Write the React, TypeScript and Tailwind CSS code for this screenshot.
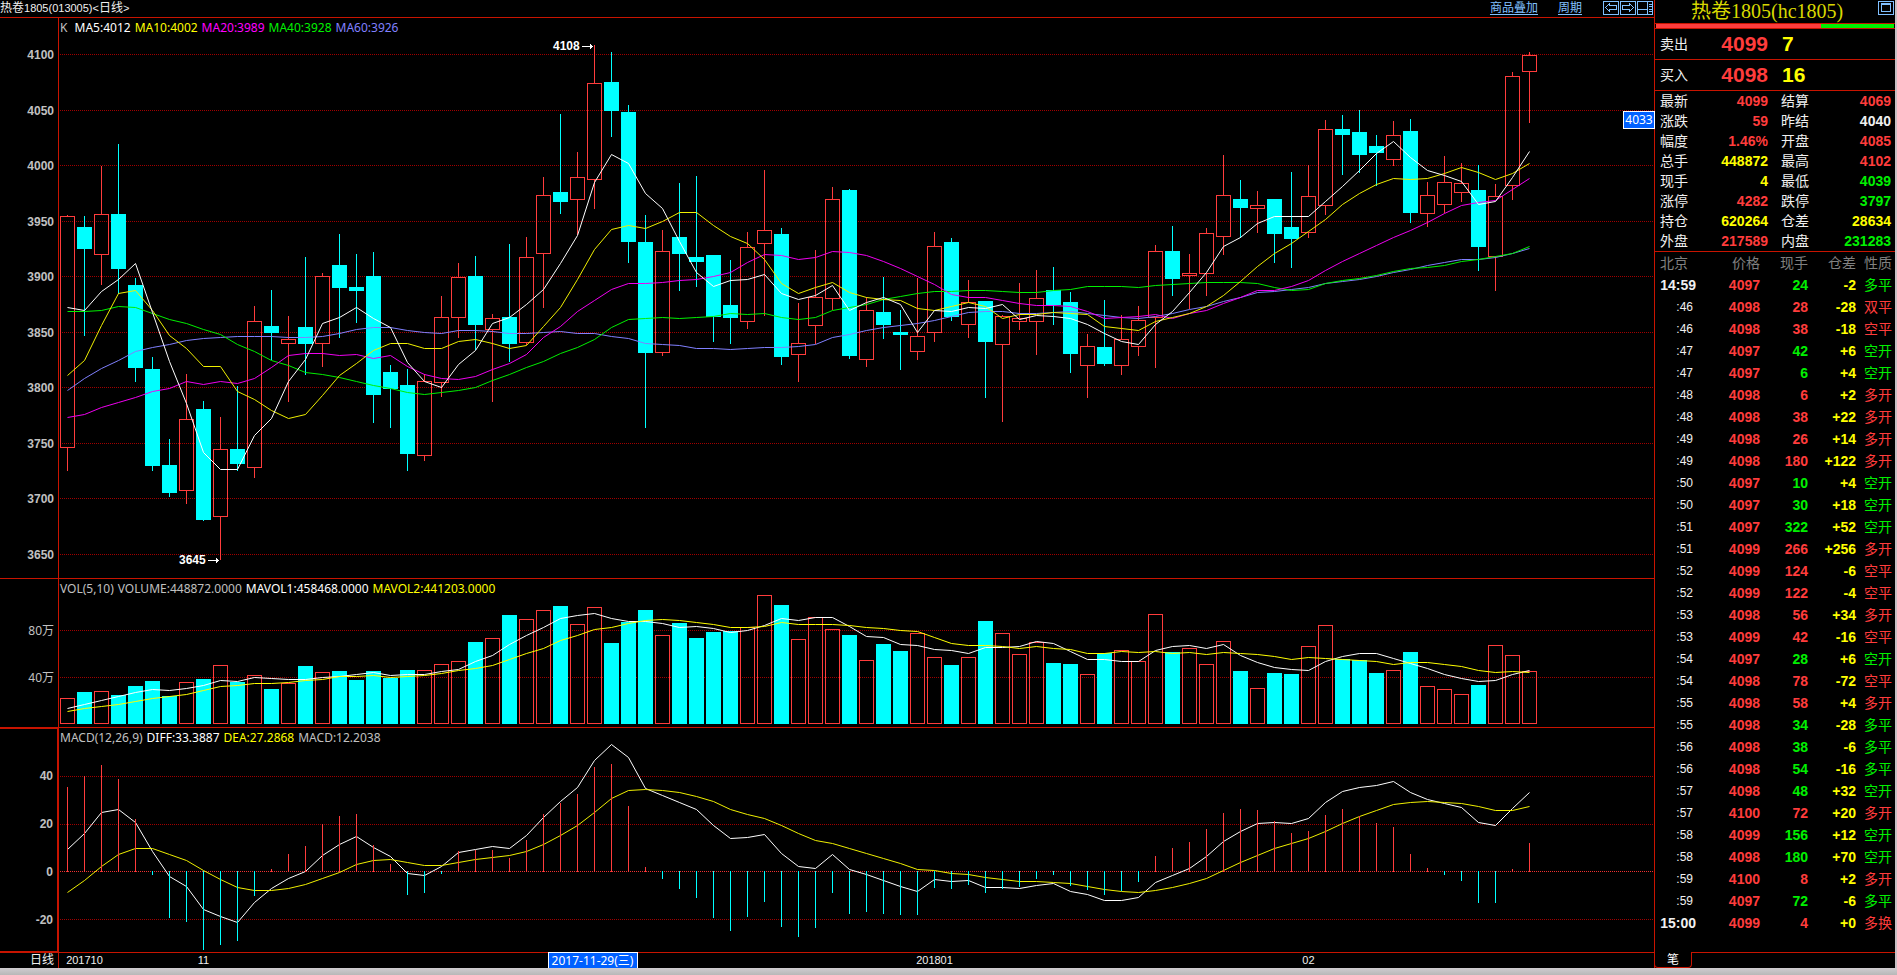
import React from "react";

const CJK = "font-['Liberation_Sans','Noto_Sans_CJK_SC',sans-serif]";
const UI = "font-['Noto_Sans','Noto_Sans_CJK_SC',sans-serif]";

const STEP = 17;
const ORIGIN = 60;
const PLOT_LEFT = 59;
const PLOT_WIDTH = 1595;

// [high, body top, body bottom, low, rising] in plot rows
type Candle = [number, number, number, number, 0 | 1];

const candles: Candle[] = [
  [215, 216, 447, 471, 1], [216, 227, 249, 336, 0], [166, 214, 254, 285, 1], [144, 214, 269, 294, 0],
  [278, 285, 368, 382, 0], [357, 369, 466, 471, 0], [439, 465, 493, 497, 0], [374, 419, 490, 504, 1],
  [401, 409, 520, 521, 0], [417, 449, 516, 560, 1], [386, 449, 464, 471, 0], [306, 321, 467, 478, 1],
  [290, 326, 333, 360, 0], [316, 339, 343, 402, 1], [257, 327, 344, 375, 0], [273, 276, 343, 367, 1],
  [234, 265, 288, 338, 0], [254, 287, 291, 323, 0], [252, 276, 395, 423, 0], [365, 372, 389, 428, 0],
  [369, 385, 454, 471, 0], [374, 381, 455, 461, 1], [296, 317, 382, 397, 1], [263, 277, 317, 338, 1],
  [256, 276, 325, 350, 0], [314, 318, 329, 402, 1], [244, 317, 344, 362, 0], [237, 257, 342, 345, 1],
  [177, 195, 253, 308, 1], [114, 192, 202, 214, 0], [152, 177, 199, 235, 1], [45, 83, 179, 209, 1],
  [52, 82, 111, 137, 0], [105, 112, 242, 263, 0], [215, 242, 353, 428, 0], [230, 251, 352, 356, 1],
  [183, 237, 254, 291, 0], [176, 257, 262, 287, 0], [255, 255, 317, 342, 0], [260, 305, 318, 344, 0],
  [232, 247, 321, 329, 1], [170, 230, 243, 316, 1], [228, 234, 357, 365, 0], [303, 343, 354, 382, 1],
  [250, 297, 325, 344, 1], [187, 199, 298, 310, 1], [189, 190, 356, 359, 0], [297, 310, 359, 367, 1],
  [277, 312, 325, 339, 0], [310, 332, 335, 370, 0], [278, 336, 351, 360, 1], [232, 246, 332, 342, 1],
  [238, 242, 317, 321, 0], [280, 302, 324, 338, 1], [301, 301, 342, 398, 0], [315, 316, 344, 422, 1],
  [283, 318, 321, 330, 1], [270, 298, 321, 355, 1], [267, 290, 305, 325, 0], [292, 302, 354, 373, 0],
  [334, 346, 365, 398, 1], [300, 347, 364, 366, 0], [315, 339, 365, 375, 1], [306, 320, 346, 356, 1],
  [245, 251, 317, 368, 1], [226, 251, 279, 296, 0], [254, 273, 275, 309, 1], [228, 233, 273, 296, 1],
  [155, 195, 236, 255, 1], [180, 199, 208, 238, 0], [191, 205, 208, 233, 1], [199, 199, 234, 263, 0],
  [172, 227, 239, 268, 0], [165, 196, 232, 238, 1], [120, 129, 205, 215, 1], [115, 129, 135, 175, 0],
  [110, 132, 155, 173, 0], [135, 146, 153, 186, 0], [121, 135, 159, 166, 1], [119, 131, 213, 223, 0],
  [182, 195, 213, 227, 1], [156, 182, 204, 213, 1], [163, 183, 192, 202, 1], [165, 190, 247, 271, 0],
  [184, 196, 256, 291, 1], [72, 76, 185, 200, 1], [52, 55, 71, 123, 1],
];

const ma5 = [307, 310, 291, 279, 263, 312, 361, 403, 452, 469, 469, 435, 418, 381, 359, 323, 317, 307, 318, 327, 362, 381, 387, 364, 350, 323, 317, 304, 289, 263, 235, 182, 154, 163, 193, 208, 241, 272, 286, 280, 279, 274, 293, 299, 295, 285, 310, 302, 297, 304, 332, 310, 311, 307, 308, 304, 319, 315, 316, 318, 324, 333, 341, 344, 324, 311, 292, 272, 246, 237, 223, 216, 216, 216, 201, 186, 170, 153, 141, 157, 170, 175, 181, 204, 201, 177, 151];
const ma10 = [375, 360, 325, 293, 290, 310, 335, 348, 366, 366, 391, 399, 410, 418, 414, 395, 375, 363, 350, 343, 343, 348, 348, 341, 339, 343, 348, 345, 326, 307, 279, 249, 229, 225, 228, 221, 212, 212, 225, 236, 243, 259, 283, 293, 287, 282, 292, 297, 299, 300, 308, 310, 306, 302, 306, 318, 314, 314, 312, 313, 314, 326, 328, 330, 321, 317, 313, 306, 295, 281, 266, 253, 243, 231, 219, 204, 193, 184, 178, 179, 178, 173, 167, 172, 179, 173, 163];
const ma20 = [417, 414, 407, 402, 397, 391, 388, 381, 384, 381, 383, 378, 367, 355, 353, 353, 355, 354, 358, 355, 366, 374, 378, 379, 376, 369, 363, 354, 337, 326, 311, 300, 289, 283, 283, 282, 280, 279, 276, 272, 262, 254, 255, 259, 257, 251, 252, 255, 261, 268, 276, 284, 294, 297, 297, 300, 303, 305, 305, 306, 311, 318, 317, 316, 314, 318, 313, 310, 303, 297, 290, 290, 286, 280, 270, 261, 253, 245, 237, 230, 222, 213, 205, 202, 200, 189, 178];
const ma40 = [311, 311, 310, 306, 307, 313, 319, 323, 329, 334, 344, 351, 360, 365, 372, 374, 377, 381, 385, 388, 392, 394, 392, 390, 387, 380, 374, 367, 361, 353, 347, 339, 327, 319, 318, 317, 318, 317, 316, 313, 314, 313, 317, 319, 317, 310, 307, 304, 299, 296, 293, 291, 291, 290, 290, 291, 292, 292, 290, 289, 286, 286, 286, 287, 285, 284, 283, 282, 282, 282, 283, 287, 290, 289, 283, 280, 278, 275, 271, 268, 267, 265, 261, 259, 256, 253, 246];
const ma60 = [390, 378, 368, 360, 351, 347, 344, 340, 338, 337, 336, 336, 336, 337, 337, 336, 333, 329, 327, 327, 330, 332, 333, 330, 330, 331, 333, 333, 332, 331, 333, 333, 336, 338, 343, 344, 345, 348, 348, 349, 348, 347, 347, 346, 344, 337, 334, 330, 327, 325, 323, 320, 316, 312, 311, 311, 313, 313, 312, 311, 313, 315, 317, 318, 316, 313, 309, 306, 301, 297, 292, 291, 289, 287, 283, 281, 279, 276, 272, 269, 265, 262, 259, 259, 257, 253, 248];

const volumes = [698, 692, 691, 695, 686, 681, 696, 682, 679, 665, 682, 675, 689, 683, 666, 672, 671, 680, 671, 678, 670, 670, 664, 661, 642, 638, 615, 619, 610, 606, 624, 607, 643, 622, 610, 635, 623, 638, 632, 631, 627, 595, 605, 639, 617, 629, 635, 660, 644, 651, 633, 657, 665, 657, 621, 633, 654, 642, 663, 664, 674, 653, 650, 661, 614, 652, 648, 664, 641, 671, 688, 673, 674, 646, 625, 659, 660, 673, 670, 652, 686, 689, 694, 685, 645, 655, 671];
const mavol1 = [708, 704, 700, 696, 692, 689, 690, 688, 685, 680, 681, 677, 678, 679, 679, 677, 676, 674, 672, 675, 674, 674, 671, 669, 661, 655, 644, 635, 627, 618, 615, 613, 618, 621, 621, 623, 627, 626, 628, 632, 630, 625, 618, 620, 617, 617, 626, 636, 637, 644, 645, 649, 650, 653, 647, 647, 646, 641, 643, 651, 659, 659, 661, 661, 650, 646, 645, 648, 644, 655, 662, 667, 669, 670, 661, 656, 653, 653, 658, 663, 668, 674, 678, 681, 680, 674, 670];
const mavol2 = [711, 708, 706, 704, 701, 698, 696, 694, 690, 686, 685, 683, 683, 682, 680, 679, 676, 676, 675, 677, 676, 675, 673, 670, 668, 665, 659, 653, 648, 640, 635, 629, 627, 623, 620, 619, 620, 622, 624, 627, 627, 626, 622, 624, 624, 624, 625, 627, 628, 630, 631, 637, 643, 645, 645, 646, 648, 646, 648, 649, 653, 653, 651, 652, 651, 653, 652, 654, 652, 653, 654, 656, 659, 657, 658, 659, 660, 661, 664, 662, 662, 664, 666, 670, 672, 671, 672];

const macd = [787, 776, 765, 779, 819, 874, 917, 921, 949, 944, 940, 895, 869, 854, 846, 824, 816, 814, 845, 864, 894, 892, 873, 851, 850, 850, 858, 840, 814, 803, 794, 767, 764, 806, 867, 878, 888, 897, 917, 930, 916, 901, 926, 936, 927, 892, 913, 911, 913, 914, 914, 887, 888, 884, 892, 888, 886, 878, 874, 885, 889, 894, 890, 881, 856, 848, 842, 829, 813, 809, 810, 821, 833, 831, 815, 809, 816, 823, 827, 854, 868, 874, 880, 902, 902, 869, 843];
const diff = [849, 833, 812, 809, 822, 851, 876, 886, 909, 916, 922, 902, 888, 878, 871, 855, 844, 836, 847, 856, 873, 875, 866, 852, 849, 846, 848, 835, 817, 801, 787, 760, 744, 757, 788, 795, 802, 809, 825, 838, 837, 834, 853, 866, 868, 854, 869, 874, 880, 886, 891, 879, 881, 880, 887, 887, 888, 885, 883, 891, 894, 900, 900, 897, 882, 875, 868, 856, 841, 831, 823, 822, 823, 818, 802, 791, 787, 785, 781, 792, 799, 803, 807, 822, 825, 808, 792];
const dea = [892, 880, 866, 854, 848, 848, 854, 860, 870, 879, 887, 890, 890, 888, 884, 878, 872, 864, 860, 859, 862, 865, 865, 862, 859, 857, 855, 851, 844, 835, 825, 812, 798, 790, 789, 790, 792, 796, 801, 809, 814, 818, 825, 833, 840, 843, 848, 853, 858, 863, 869, 870, 873, 874, 877, 879, 881, 881, 882, 883, 886, 889, 891, 892, 890, 887, 883, 878, 870, 862, 855, 848, 843, 838, 831, 823, 816, 810, 804, 802, 801, 802, 803, 806, 810, 810, 806];

const centre = (i: number) => ORIGIN + 7.5 + STEP * i;
const share = (x: number) => `${((x - PLOT_LEFT) / PLOT_WIDTH) * 100}%`;

function Curve({ rows, color }: { rows: number[]; color: string }) {
  return (
    <polyline
      fill="none"
      stroke={color}
      strokeWidth="1"
      points={rows.map((y, i) => `${centre(i)},${y + 0.5}`).join(" ")}
    />
  );
}

function Grid({ rows, color = "#a00000" }: { rows: number[]; color?: string }) {
  return (
    <g stroke={color} strokeDasharray="1 1" shapeRendering="crispEdges">
      {rows.map((y) => (
        <line key={y} x1={PLOT_LEFT + 1} x2={PLOT_LEFT + PLOT_WIDTH} y1={y + 0.5} y2={y + 0.5} />
      ))}
    </g>
  );
}

function Plot({ top, height, size, label, children }: { top: number; height: number; size: string; label: string; children: React.ReactNode }) {
  return (
    <svg
      role="img"
      aria-label={label}
      viewBox={`${PLOT_LEFT} ${top} ${PLOT_WIDTH} ${height}`}
      preserveAspectRatio="none"
      className={`block w-full overflow-visible ${size}`}
    >
      {children}
    </svg>
  );
}

function PriceChart() {
  return (
    <Plot top={38} height={540} size="h-[540px]" label="K线">
      <Grid rows={[54, 110, 165, 221, 276, 332, 387, 443, 498, 554]} />
      <g shapeRendering="crispEdges">
        {candles.map(([hi, top, bottom, lo, up], i) => {
          const x = ORIGIN + STEP * i;
          return up ? (
            <g key={i} stroke="#ff3c3c" fill="none">
              <path d={`M${x + 7.5} ${hi}V${top}M${x + 7.5} ${bottom}V${lo}`} />
              <rect x={x + 0.5} y={top + 0.5} width="14" height={bottom - top} />
            </g>
          ) : (
            <g key={i} fill="#00ffff">
              <rect x={x + 7} y={hi} width="1" height={lo - hi} />
              <rect x={x} y={top} width="15" height={bottom - top} />
            </g>
          );
        })}
      </g>
      <Curve rows={ma60} color="#8080ff" />
      <Curve rows={ma40} color="#00f000" />
      <Curve rows={ma20} color="#f000f0" />
      <Curve rows={ma10} color="#f0f000" />
      <Curve rows={ma5} color="#ffffff" />
    </Plot>
  );
}

function VolumeChart() {
  return (
    <Plot top={599} height={128} size="h-[128px]" label="成交量">
      <Grid rows={[630, 677]} />
      <g shapeRendering="crispEdges">
        {volumes.map((y, i) => {
          const x = ORIGIN + STEP * i;
          return candles[i][4] ? (
            <rect key={i} x={x + 0.5} y={y + 0.5} width="14" height={723 - y} fill="none" stroke="#ff3c3c" />
          ) : (
            <rect key={i} x={x} y={y} width="15" height={724 - y} fill="#00ffff" />
          );
        })}
      </g>
      <Curve rows={mavol1} color="#ffffff" />
      <Curve rows={mavol2} color="#ffff00" />
    </Plot>
  );
}

function MacdChart() {
  return (
    <Plot top={748} height={204} size="h-[204px]" label="MACD">
      <Grid rows={[776, 824, 919]} />
      <Grid rows={[871]} color="#f03030" />
      <Curve rows={diff} color="#ffffff" />
      <Curve rows={dea} color="#f0f000" />
      <g shapeRendering="crispEdges">
        {macd.map((y, i) => (
          <rect
            key={i}
            x={ORIGIN + 7 + STEP * i}
            y={Math.min(y, 871)}
            width="1"
            height={Math.abs(y - 871) + 1}
            fill={y < 871 ? "#ff3c3c" : "#00ffff"}
          />
        ))}
      </g>
    </Plot>
  );
}

function Legend({ items }: { items: [string, string][] }) {
  return (
    <div className={`flex h-5 items-center gap-1 pl-px text-xs whitespace-nowrap ${UI}`}>
      {items.map(([text, color]) => (
        <span key={text} className={color}>{text}</span>
      ))}
    </div>
  );
}

function Marker({ text, place }: { text: string; place: string }) {
  return (
    <div className={`absolute flex h-4 items-center gap-0.5 text-xs font-bold text-white ${place}`}>
      {text}
      <svg width="11" height="7" viewBox="0 0 11 7" fill="#fff" shapeRendering="crispEdges" aria-hidden="true">
        <path d="M0 3h11v1H0zM8 1h1v5H8zM9 2h1v3H9z" />
      </svg>
    </div>
  );
}

type IconKind = "left" | "right" | "split" | "window";

function ToolButton({ kind, label }: { kind: IconKind; label: string }) {
  return (
    <button type="button" aria-label={label} className="block size-4">
      <svg width="16" height="14" viewBox="0 0 16 14" fill="none" stroke="#80c0ff" shapeRendering="crispEdges" className="block">
        <path d="M.5.5h15v13H.5z" />
        {kind === "left" && <path d="M2.5 6.5l4-4v2h7v4h-7v2z" />}
        {kind === "right" && <path d="M13.5 6.5l-4-4v2h-7v4h7v2z" />}
        {kind === "split" && <path d="M0 8.5h10M10.5 0v14M12 3.5h3M12 5.5h3M12 8.5h3M12 10.5h3" />}
        {kind === "window" && <path d="M3.5 2.5h9v8h-9zM3 3.5h10" />}
      </svg>
    </button>
  );
}

function Axis({ labels, box, size }: { labels: string[]; box: string; size: string }) {
  return (
    <div className={`w-[59px] shrink-0 border-r border-[#c81400] pr-1 text-right ${box}`}>
      <div className={`flex flex-col justify-between text-xs leading-4 text-[#c0c0c0] ${size}`}>
        {labels.map((t) => (
          <span key={t}>{t}</span>
        ))}
      </div>
    </div>
  );
}

const gray = "text-[#c0c0c0]";
const red = "text-[#ff3c3c]";
const green = "text-[#00f000]";
const yellow = "text-[#ffff00]";
const white = "text-[#f0f0f0]";

const quotes: [string, string, string, string, string, string][] = [
  ["最新", "4099", red, "结算", "4069", red],
  ["涨跌", "59", red, "昨结", "4040", white],
  ["幅度", "1.46%", red, "开盘", "4085", red],
  ["总手", "448872", yellow, "最高", "4102", red],
  ["现手", "4", yellow, "最低", "4039", green],
  ["涨停", "4282", red, "跌停", "3797", green],
  ["持仓", "620264", yellow, "仓差", "28634", yellow],
  ["外盘", "217589", red, "内盘", "231283", green],
];

const ticks: [string, string, string, string, string, string][] = [
  ["14:59", "4097", "24", "-2", "多平", green],
  [":46", "4098", "28", "-28", "双平", red],
  [":46", "4098", "38", "-18", "空平", red],
  [":47", "4097", "42", "+6", "空开", green],
  [":47", "4097", "6", "+4", "空开", green],
  [":48", "4098", "6", "+2", "多开", red],
  [":48", "4098", "38", "+22", "多开", red],
  [":49", "4098", "26", "+14", "多开", red],
  [":49", "4098", "180", "+122", "多开", red],
  [":50", "4097", "10", "+4", "空开", green],
  [":50", "4097", "30", "+18", "空开", green],
  [":51", "4097", "322", "+52", "空开", green],
  [":51", "4099", "266", "+256", "多开", red],
  [":52", "4099", "124", "-6", "空平", red],
  [":52", "4099", "122", "-4", "空平", red],
  [":53", "4098", "56", "+34", "多开", red],
  [":53", "4099", "42", "-16", "空平", red],
  [":54", "4097", "28", "+6", "空开", green],
  [":54", "4098", "78", "-72", "空平", red],
  [":55", "4098", "58", "+4", "多开", red],
  [":55", "4098", "34", "-28", "多平", green],
  [":56", "4098", "38", "-6", "多平", green],
  [":56", "4098", "54", "-16", "多平", green],
  [":57", "4098", "48", "+32", "空开", green],
  [":57", "4100", "72", "+20", "多开", red],
  [":58", "4099", "156", "+12", "空开", green],
  [":58", "4098", "180", "+70", "空开", green],
  [":59", "4100", "8", "+2", "多开", red],
  [":59", "4097", "72", "-6", "多平", green],
  ["15:00", "4099", "4", "+0", "多换", red],
];

const dates: [string, number][] = [
  ["201710", 1],
  ["11", 8],
  ["201801", 51],
  ["02", 73],
];

function BookRow({ label, price, amount }: { label: string; price: string; amount: string }) {
  return (
    <div className="flex h-[31px] items-center border-b border-[#c81400] pl-[5px]">
      <span className="w-[28px] text-sm text-[#f0f0f0]">{label}</span>
      <span className="w-[80px] text-right text-[21px] font-bold text-[#ff3c3c]">{price}</span>
      <span className="pl-[14px] text-[21px] font-bold text-[#ffff00]">{amount}</span>
    </div>
  );
}

function SidePanel() {
  return (
    <aside className="flex w-[240px] shrink-0 flex-col">
      <header className="flex h-[23px] items-center justify-between">
        <h2 className="pl-[36px] font-['Liberation_Serif','Noto_Sans_CJK_SC',serif] text-xl leading-[23px] whitespace-nowrap text-[#d8d800]">
          热卷1805(hc1805)
        </h2>
        <div className="mb-auto pr-px">
          <ToolButton kind="window" label="窗口" />
        </div>
      </header>
      <div className="flex h-[6px] border-y border-[#c81400] px-px">
        <div className="w-[165px] bg-[#ff3c3c]" />
        <div className="flex-1 bg-[#00f000]" />
      </div>
      <BookRow label="卖出" price="4099" amount="7" />
      <BookRow label="买入" price="4098" amount="16" />
      <dl className="border-b border-[#c81400] text-sm leading-5">
        {quotes.map(([a, av, ac, b, bv, bc]) => (
          <div key={a} className="flex h-5 pr-1 pl-[5px]">
            <dt className="w-[28px] text-[#f0f0f0]">{a}</dt>
            <dd className={`w-[80px] text-right font-bold ${ac}`}>{av}</dd>
            <dt className="ml-[13px] w-[28px] text-[#f0f0f0]">{b}</dt>
            <dd className={`flex-1 text-right font-bold ${bc}`}>{bv}</dd>
          </div>
        ))}
      </dl>
      <table className="w-full table-fixed border-collapse text-sm leading-5">
        <colgroup>
          <col className="w-[41px]" />
          <col className="w-[64px]" />
          <col className="w-[48px]" />
          <col className="w-[48px]" />
          <col />
        </colgroup>
        <thead>
          <tr className="h-[22px] text-[#808080]">
            <th className="p-0 pl-[5px] text-left font-normal">北京</th>
            <th className="p-0 text-right font-normal">价格</th>
            <th className="p-0 text-right font-normal">现手</th>
            <th className="p-0 text-right font-normal">仓差</th>
            <th className="p-0 pr-[3px] text-right font-normal">性质</th>
          </tr>
        </thead>
        <tbody>
          {ticks.map(([time, price, lots, delta, kind, color], i) => (
            <tr key={i} className="h-[22px] font-bold">
              <td className={time.length > 3 ? "p-0 text-right text-[#f0f0f0]" : "p-0 pr-[3px] text-right text-xs font-normal text-[#f0f0f0]"}>{time}</td>
              <td className="p-0 text-right text-[#ff3c3c]">{price}</td>
              <td className={`p-0 text-right ${color}`}>{lots}</td>
              <td className="p-0 text-right text-[#ffff00]">{delta}</td>
              <td className={`p-0 pr-[3px] text-right font-normal ${color}`}>{kind}</td>
            </tr>
          ))}
        </tbody>
      </table>
      <div className="mt-[18px] flex h-4">
        <button type="button" className="-ml-px w-[38px] rounded-b-sm border border-t-0 border-[#c81400] text-xs leading-[14px] text-white">笔</button>
        <div className="flex-1 border-t border-[#c81400]" />
      </div>
    </aside>
  );
}

export default function App() {
  return (
    <div className={`min-h-screen w-full bg-black ${CJK}`}>
      <div className="flex">
        <main className="min-w-0 flex-1 border-r border-[#c81400]">
          <header className="flex h-[17px] items-start justify-between text-xs leading-4">
            <h1 className="text-[#f0f0f0] whitespace-nowrap">
              热卷<span className="text-[11px]">1805(013005)&lt;</span>日线<span className="text-[11px]">&gt;</span>
            </h1>
            <nav className="flex text-[#80c0ff]">
              <a href="#overlay" className="underline underline-offset-2">商品叠加</a>
              <a href="#period" className="ml-5 underline underline-offset-2">周期</a>
              <div className="ml-[21px] flex gap-px pr-px">
                <ToolButton kind="left" label="后退" />
                <ToolButton kind="right" label="前进" />
                <ToolButton kind="split" label="布局" />
              </div>
            </nav>
          </header>

          <section className="flex border-t border-[#c81400]">
            <Axis
              labels={["4100", "4050", "4000", "3950", "3900", "3850", "3800", "3750", "3700", "3650"]}
              box="pt-[29px] font-bold"
              size="h-[516px]"
            />
            <div className="relative min-w-0 flex-1">
              <Legend
                items={[
                  ["K\u00a0", gray],
                  ["MA5:4012", "text-white"],
                  ["MA10:4002", "text-[#ffff00]"],
                  ["MA20:3989", "text-[#ff00ff]"],
                  ["MA40:3928", "text-[#00f000]"],
                  ["MA60:3926", "text-[#8080ff]"],
                ]}
              />
              <PriceChart />
              <Marker text="4108" place="left-[494px] top-[20px]" />
              <Marker text="3645" place="left-[120px] top-[534px]" />
              <div className={`absolute top-[93px] -right-px flex h-[18px] w-8 items-center justify-center border border-white bg-[#0060ff] text-xs text-white ${UI}`}>
                4033
              </div>
            </div>
          </section>

          <section className="flex border-t border-[#c81400]">
            <Axis labels={["80万", "40万"]} box={`pt-[44px] ${UI}`} size="h-[63px]" />
            <div className="min-w-0 flex-1">
              <Legend
                items={[
                  ["VOL(5,10)", gray],
                  ["VOLUME:448872.0000", gray],
                  ["MAVOL1:458468.0000", "text-white"],
                  ["MAVOL2:441203.0000", "text-[#ffff00]"],
                ]}
              />
              <VolumeChart />
            </div>
          </section>

          <section className="flex border-t border-[#c81400]">
            <Axis labels={["40", "20", "0", "-20"]} box="border-t border-r-2 border-b pt-[39px] font-bold" size="h-[160px]" />
            <div className="min-w-0 flex-1">
              <Legend
                items={[
                  ["MACD(12,26,9)", gray],
                  ["DIFF:33.3887", "text-white"],
                  ["DEA:27.2868", "text-[#ffff00]"],
                  ["MACD:12.2038", gray],
                ]}
              />
              <MacdChart />
            </div>
          </section>

          <footer className="flex h-4 border-t border-[#c81400] text-[11px] leading-[15px] text-[#f0f0f0]">
            <div className="w-[59px] shrink-0 border-r border-[#c81400] pr-1 text-right text-xs leading-[15px]">日线</div>
            <div className="relative min-w-0 flex-1">
              {dates.map(([text, i]) => (
                <span key={text} className="absolute top-0 -translate-x-1/2" style={{ left: share(centre(i)) }}>
                  {text}
                </span>
              ))}
              <span
                className={`absolute -top-px flex h-4 w-[90px] items-center justify-center border border-b-0 border-white bg-[#0060ff] text-xs whitespace-nowrap text-white ${UI}`}
                style={{ left: share(centre(31) - 47) }}
              >
                2017-11-29(三)
              </span>
            </div>
          </footer>
        </main>
        <SidePanel />
        <div className="w-[2px] shrink-0 bg-[#c8c0c4]" />
      </div>
      <div className="h-[7px] bg-linear-to-b from-[#d0ccd0] to-[#b8b8b8]" />
    </div>
  );
}
